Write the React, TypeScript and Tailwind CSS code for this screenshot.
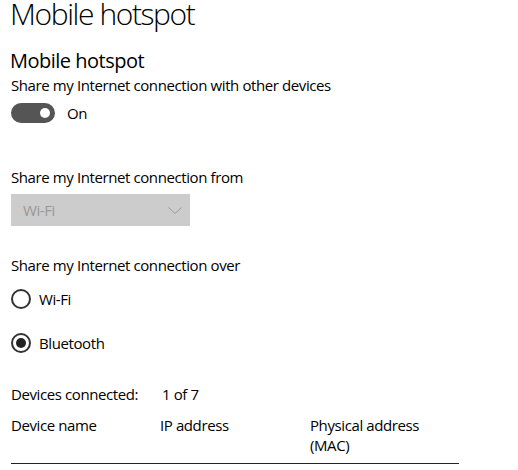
export default function App() {
  return (
    <div className="h-[470px] w-[518px] overflow-hidden bg-white pl-[11px] font-['Open_Sans',sans-serif] text-black">
      <h1 className="ml-[-1px] mt-[1px] text-[30px] font-light leading-[26px] tracking-[-1.4px]">Mobile hotspot</h1>

      <h2 className="ml-[-1px] mt-[20px] text-[20px] leading-[28px] tracking-[-0.5px]">Mobile hotspot</h2>
      <div className="text-[15px] leading-[20px] tracking-[-0.4px]">
        <p>Share my Internet connection with other devices</p>
        <div className="mt-[8px] flex h-[20px] items-center gap-[12px]">
          <div className="flex h-[20px] w-[44px] items-center justify-end rounded-full bg-[#555555] pr-[5px]">
            <div className="h-[10px] w-[10px] rounded-full bg-white" />
          </div>
          <span>On</span>
        </div>

        <p className="mt-[44px]">Share my Internet connection from</p>
        <div className="mt-[7px] flex h-[32px] w-[179px] items-center justify-between bg-[#cccccc] pl-[12px] pr-[8px]">
          <span className="text-[#999999]">Wi-Fi</span>
          <svg width="14" height="7" viewBox="0 0 14 7" fill="none">
            <path d="M0.5 0.5 L7 6.5 L13.5 0.5" stroke="#9a9a9a" strokeWidth="1" />
          </svg>
        </div>

        <p className="mt-[29px]">Share my Internet connection over</p>
        <div className="mt-[14px] flex h-[20px] items-center gap-[8px]">
          <div className="h-[20px] w-[20px] rounded-full border-2 border-[#333333]" />
          <span>Wi-Fi</span>
        </div>
        <div className="mt-[24px] flex h-[20px] items-center gap-[8px]">
          <div className="flex h-[20px] w-[20px] items-center justify-center rounded-full border-2 border-[#333333]">
            <div className="h-[10px] w-[10px] rounded-full bg-[#222222]" />
          </div>
          <span>Bluetooth</span>
        </div>

        <div className="mt-[31px] flex">
          <span className="w-[151px]">Devices connected:</span>
          <span>1 of 7</span>
        </div>

        <div className="mt-[11px] w-[448px]">
          <div className="flex">
            <span className="w-[149px]">Device name</span>
            <span className="w-[150px]">IP address</span>
            <span className="w-[120px]">Physical address (MAC)</span>
          </div>
          <div className="mt-[8px] border-t border-[#222222]" />
        </div>
      </div>
    </div>
  );
}
